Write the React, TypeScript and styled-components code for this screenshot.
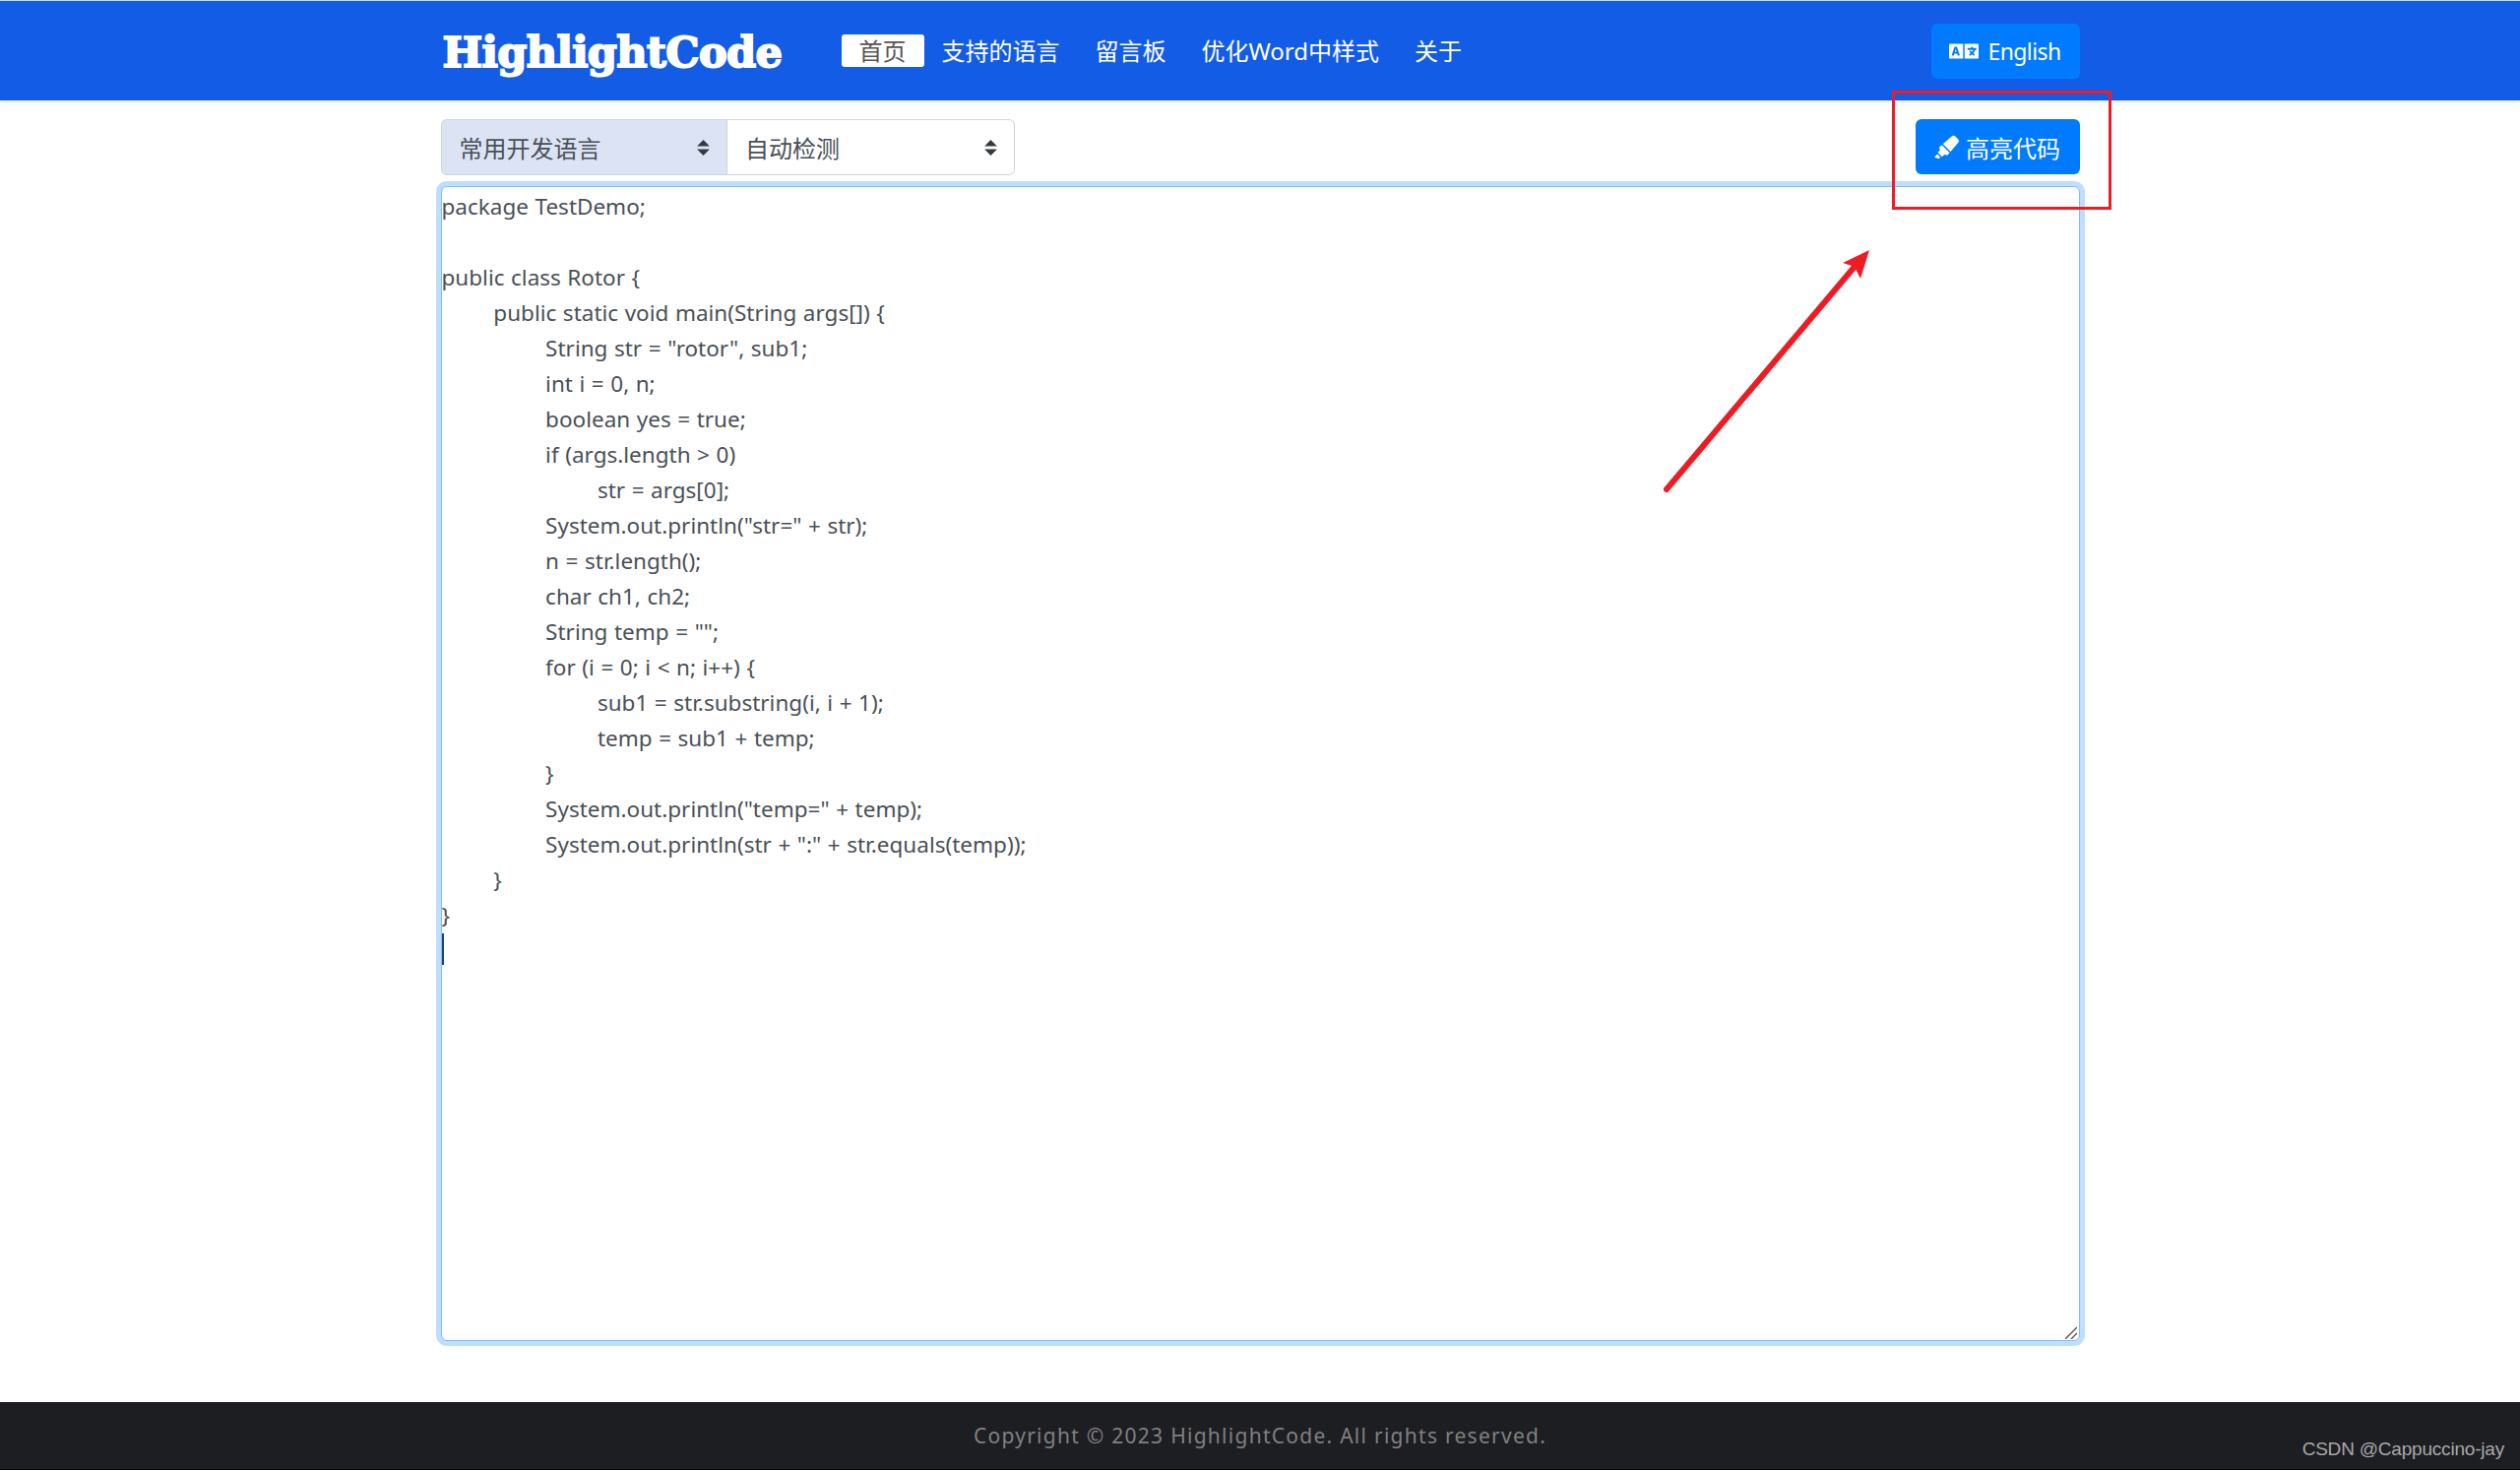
import React from 'react';
import styled, { createGlobalStyle } from 'styled-components';
import { FaHighlighter, FaLanguage } from 'react-icons/fa';

const codeSample = `package TestDemo;

public class Rotor {
\tpublic static void main(String args[]) {
\t\tString str = "rotor", sub1;
\t\tint i = 0, n;
\t\tboolean yes = true;
\t\tif (args.length > 0)
\t\t\tstr = args[0];
\t\tSystem.out.println("str=" + str);
\t\tn = str.length();
\t\tchar ch1, ch2;
\t\tString temp = "";
\t\tfor (i = 0; i < n; i++) {
\t\t\tsub1 = str.substring(i, i + 1);
\t\t\ttemp = sub1 + temp;
\t\t}
\t\tSystem.out.println("temp=" + temp);
\t\tSystem.out.println(str + ":" + str.equals(temp));
\t}
}
`;

const navItems = ['首页', '支持的语言', '留言板', '优化Word中样式', '关于'];

const uiFont = `"Noto Sans", "Noto Sans CJK SC", sans-serif`;

const selectArrows = `url("data:image/svg+xml,%3csvg xmlns='http://www.w3.org/2000/svg' width='4' height='5' viewBox='0 0 4 5'%3e%3cpath fill='%23343a40' d='M2 0L0 2h4zm0 5L0 3h4z'/%3e%3c/svg%3e")`;

const GlobalStyle = createGlobalStyle`
  html, body {
    margin: 0;
    padding: 0;
    background: #fff;
  }
  * {
    box-sizing: border-box;
  }
`;

const Page = styled.div`
  position: relative;
  display: flex;
  flex-direction: column;
  height: 1493px;
  overflow: hidden;
  font-family: ${uiFont};
`;

const Header = styled.header`
  height: 102px;
  flex: none;
  background: #135ce6;
  border-top: 1px solid #d9d9d9;
  box-shadow: 0 2px 6px rgba(0, 0, 0, 0.08);
`;

const Container = styled.div`
  width: 1665px;
  margin: 0 auto;
`;

const HeaderRow = styled(Container)`
  height: 100%;
  display: flex;
  align-items: center;
`;

const Logo = styled.a`
  width: 407px;
  padding-left: 2px;
  margin-top: 2px;
  color: #fff;
  font-family: "DejaVu Serif", serif;
  font-weight: 700;
  font-size: 43px;
  letter-spacing: -0.6px;
  -webkit-text-stroke: 2px #fff;
  white-space: nowrap;
`;

const Nav = styled.nav`
  display: flex;
  flex: 1;
`;

const NavLink = styled.a<{ $active?: boolean }>`
  height: 33px;
  line-height: 33px;
  padding: 0 18px;
  font-size: 24px;
  border-radius: 3px;
  white-space: nowrap;
  color: ${(p) => (p.$active ? '#555' : '#fff')};
  background: ${(p) => (p.$active ? '#fff' : 'transparent')};
`;

const Button = styled.button`
  display: inline-flex;
  align-items: center;
  justify-content: center;
  height: 56px;
  border: none;
  border-radius: 6px;
  background: #007bff;
  color: #fff;
  font-family: ${uiFont};
  font-size: 24px;
`;

const LangButton = styled(Button)`
  width: 151px;
  gap: 9px;
  font-size: 23px;
  letter-spacing: -0.6px;
`;

const HighlightButton = styled(Button)`
  width: 167px;
  gap: 7px;
`;

const Main = styled.main`
  flex: 1;
  padding-top: 19px;
`;

const Toolbar = styled.div`
  display: flex;
  justify-content: space-between;
  align-items: flex-start;
  margin-bottom: 11px;
`;

const SelectGroup = styled.div`
  display: flex;
  width: 583px;
  height: 57px;
`;

const Select = styled.select<{ $muted?: boolean }>`
  appearance: none;
  width: 50%;
  height: 100%;
  padding: 2px 32px 0 18px;
  border: 1.6px solid #ced4da;
  border-radius: ${(p) => (p.$muted ? '6px 0 0 6px' : '0 6px 6px 0')};
  border-left-width: ${(p) => (p.$muted ? '1.6px' : '0')};
  background: ${(p) => (p.$muted ? '#dce3f5' : '#fff')} ${selectArrows} no-repeat right 17px center / 13px 16px;
  color: #495057;
  font-family: ${uiFont};
  font-size: 24px;
`;

const EditorWrap = styled.div`
  position: relative;
  height: 1173px;
`;

const CodeArea = styled.textarea`
  display: block;
  width: 100%;
  height: 100%;
  padding: 2px 0 0 0;
  border: 1.6px solid #80bdff;
  border-radius: 6px;
  outline: none;
  box-shadow: 0 0 0 5px rgba(0, 123, 255, 0.25);
  color: #495057;
  font-family: ${uiFont};
  font-size: 22.5px;
  word-spacing: 0.7px;
  line-height: 36px;
  tab-size: 52.8px;
  white-space: pre;
  overflow: hidden;
  resize: none;
`;

const Caret = styled.span`
  position: absolute;
  left: 1px;
  top: 759px;
  width: 2px;
  height: 32px;
  background: #1c3f80;
`;

const ResizeGrip = styled.svg`
  position: absolute;
  right: 3px;
  bottom: 2px;
  width: 12px;
  height: 12px;
`;

const Footer = styled.footer`
  position: relative;
  flex: none;
  height: 69px;
  display: flex;
  align-items: center;
  justify-content: center;
  background: #1d1e22;
  border-bottom: 1px solid #000;
  color: #808080;
  font-size: 21px;
  letter-spacing: 1.27px;
`;

const Watermark = styled.span`
  position: absolute;
  right: 16px;
  bottom: 9px;
  color: #a8a8a8;
  font-family: "Liberation Sans", sans-serif;
  font-size: 19px;
  letter-spacing: -0.2px;
`;

// red marks drawn on top of the screenshot
const MarkBox = styled.div`
  position: absolute;
  left: 1922px;
  top: 92px;
  width: 223px;
  height: 121px;
  border: 3px solid #ed1c24;
`;

const MarkArrow = styled.svg`
  position: absolute;
  left: 1680px;
  top: 240px;
  width: 230px;
  height: 270px;
`;

export default function App() {
  return (
    <>
      <GlobalStyle />
      <Page>
        <Header>
          <HeaderRow>
            <Logo>HighlightCode</Logo>
            <Nav>
              {navItems.map((item, i) => (
                <NavLink key={item} $active={i === 0}>
                  {item}
                </NavLink>
              ))}
            </Nav>
            <LangButton>
              <FaLanguage size={30} />
              English
            </LangButton>
          </HeaderRow>
        </Header>
        <Main>
          <Container>
            <Toolbar>
              <SelectGroup>
                <Select $muted defaultValue="common">
                  <option value="common">常用开发语言</option>
                </Select>
                <Select defaultValue="auto">
                  <option value="auto">自动检测</option>
                </Select>
              </SelectGroup>
              <HighlightButton>
                <FaHighlighter size={25} />
                高亮代码
              </HighlightButton>
            </Toolbar>
            <EditorWrap>
              <CodeArea defaultValue={codeSample} spellCheck={false} />
              <Caret />
              <ResizeGrip viewBox="0 0 12 12">
                <path d="M0 12L12 0M6 12L12 6" stroke="#555" strokeWidth="1.4" fill="none" />
              </ResizeGrip>
            </EditorWrap>
          </Container>
        </Main>
        <Footer>
          Copyright © 2023 HighlightCode. All rights reserved.
          <Watermark>CSDN @Cappuccino-jay</Watermark>
        </Footer>
        <MarkBox />
        <MarkArrow viewBox="1680 240 230 270">
          <path d="M1693 497L1883 272" stroke="#ed1c24" strokeWidth="6" strokeLinecap="round" fill="none" />
          <path d="M1899 254L1872 267L1884 271L1890 283Z" fill="#ed1c24" />
        </MarkArrow>
      </Page>
    </>
  );
}
